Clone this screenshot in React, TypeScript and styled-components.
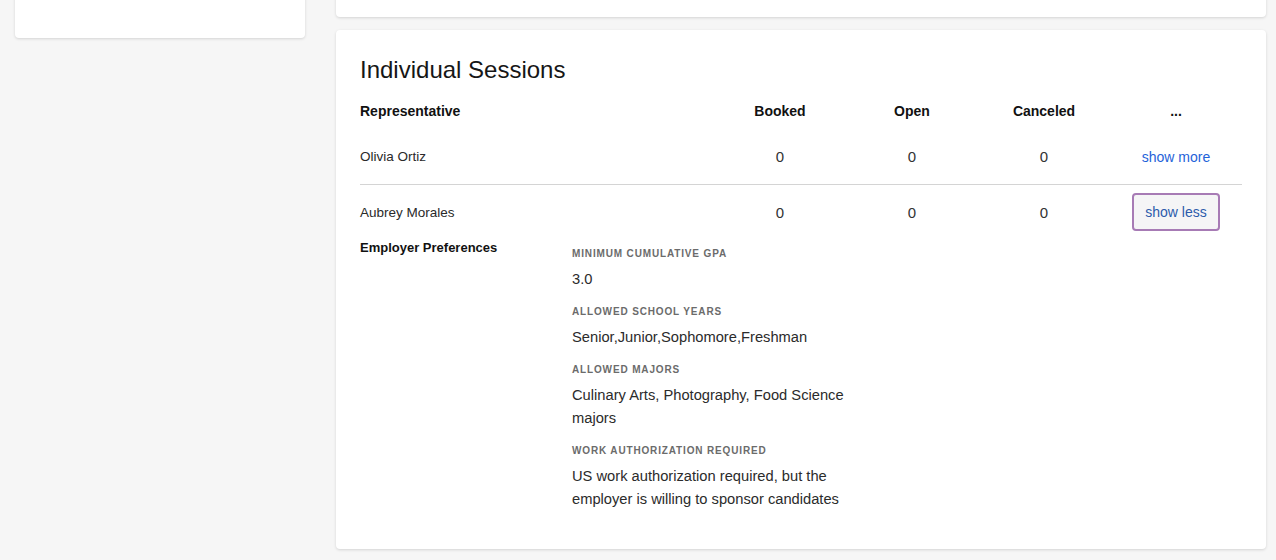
import React from 'react'
import styled, { createGlobalStyle } from 'styled-components'

const GlobalStyle = createGlobalStyle`
  html, body {
    margin: 0;
    padding: 0;
    background: #f6f6f6;
    font-family: "Liberation Sans", Arial, sans-serif;
    color: #222;
  }
`

const Page = styled.div`
  display: grid;
  grid-template-columns: 290px 930px;
  column-gap: 31px;
  align-items: start;
  padding: 0 10px 10px 15px;
  margin-top: -20px;
`

const Card = styled.div`
  background: #fff;
  border-radius: 4px;
  box-shadow: 0 1px 3px rgba(0, 0, 0, 0.14);
`

const SideCard = styled(Card)`
  height: 58px;
`

const Column = styled.div`
  display: flex;
  flex-direction: column;
  gap: 13px;
`

const StubCard = styled(Card)`
  height: 37px;
`

const SessionsCard = styled(Card)`
  padding: 26px 24px 38px;
`

const Title = styled.h2`
  margin: 0;
  font-size: 24px;
  line-height: 28px;
  font-weight: 400;
  color: #161616;
`

const Row = styled.div<{ $head?: boolean }>`
  display: grid;
  grid-template-columns: 1fr repeat(4, 132px);
  align-items: center;
  height: ${(p) => (p.$head ? '36px' : '55px')};
  margin-top: ${(p) => (p.$head ? '9px' : '0')};
  font-size: ${(p) => (p.$head ? '14px' : '13.5px')};
  font-weight: ${(p) => (p.$head ? 700 : 400)};
  color: ${(p) => (p.$head ? '#111' : '#2a2a2a')};

  & + & {
    height: 54px;
    border-top: ${(p) => (p.$head ? 'none' : '1px solid #d4d4d4')};
  }
`

const Cell = styled.div<{ $num?: boolean }>`
  text-align: center;
  font-size: ${(p) => (p.$num ? '15px' : 'inherit')};
  color: ${(p) => (p.$num ? '#333' : 'inherit')};
`

const NameCell = styled.div`
  text-align: left;
`

const LinkButton = styled.button<{ $active?: boolean }>`
  justify-self: center;
  font-family: inherit;
  font-size: 14px;
  cursor: pointer;
  color: ${(p) => (p.$active ? '#2c5bab' : '#1f63d9')};
  background: ${(p) => (p.$active ? '#f5f5f6' : 'transparent')};
  border: 2px solid ${(p) => (p.$active ? '#a77bb5' : 'transparent')};
  border-radius: 4px;
  height: 38px;
  padding: 0 11px;
`

const Details = styled.div`
  display: grid;
  grid-template-columns: 212px 1fr;
`

const DetailsTitle = styled.div`
  font-size: 13px;
  line-height: 18px;
  font-weight: 700;
  color: #111;
`

const PrefList = styled.dl`
  margin: 0;
  padding-top: 7.5px;
  max-width: 282px;
`

const PrefLabel = styled.dt`
  font-size: 10px;
  line-height: 14px;
  font-weight: 700;
  letter-spacing: 0.85px;
  text-transform: uppercase;
  color: #6b6b6b;
  margin-bottom: 7px;
`

const PrefValue = styled.dd`
  margin: 0 0 14.2px;
  font-size: 14.7px;
  line-height: 23px;
  color: #2b2b2b;

  &:last-child {
    margin-bottom: 0;
  }
`

interface ISession {
  name: string
  booked: number
  open: number
  canceled: number
  expanded?: boolean
}

const sessions: ISession[] = [
  { name: 'Olivia Ortiz', booked: 0, open: 0, canceled: 0 },
  { name: 'Aubrey Morales', booked: 0, open: 0, canceled: 0, expanded: true },
]

const preferences = [
  { label: 'Minimum Cumulative GPA', value: '3.0' },
  { label: 'Allowed School Years', value: 'Senior,Junior,Sophomore,Freshman' },
  { label: 'Allowed Majors', value: 'Culinary Arts, Photography, Food Science majors' },
  {
    label: 'Work Authorization Required',
    value: 'US work authorization required, but the employer is willing to sponsor candidates',
  },
]

const App: React.FC = () => {
  return (
    <>
      <GlobalStyle />
      <Page>
        <SideCard />
        <Column>
          <StubCard />
          <SessionsCard>
            <Title>Individual Sessions</Title>
            <Row $head>
              <NameCell>Representative</NameCell>
              <Cell>Booked</Cell>
              <Cell>Open</Cell>
              <Cell>Canceled</Cell>
              <Cell>...</Cell>
            </Row>
            <div>
              {sessions.map((s) => (
                <Row key={s.name}>
                  <NameCell>{s.name}</NameCell>
                  <Cell $num>{s.booked}</Cell>
                  <Cell $num>{s.open}</Cell>
                  <Cell $num>{s.canceled}</Cell>
                  <LinkButton $active={s.expanded}>
                    {s.expanded ? 'show less' : 'show more'}
                  </LinkButton>
                </Row>
              ))}
            </div>
            <Details>
              <DetailsTitle>Employer Preferences</DetailsTitle>
              <PrefList>
                {preferences.map((p) => (
                  <React.Fragment key={p.label}>
                    <PrefLabel>{p.label}</PrefLabel>
                    <PrefValue>{p.value}</PrefValue>
                  </React.Fragment>
                ))}
              </PrefList>
            </Details>
          </SessionsCard>
        </Column>
      </Page>
    </>
  )
}

export default App
